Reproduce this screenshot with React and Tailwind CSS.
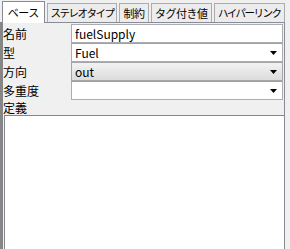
import React from "react";

const font = "font-['MS_UI_Gothic','Noto_Sans_CJK_JP',sans-serif]";

function Arrow() {
  return (
    <svg width="7" height="4" viewBox="0 0 7 4" className="shrink-0">
      <polygon points="0,0 7,0 3.5,4" fill="#000" />
    </svg>
  );
}

function Tab({ label, width, active, tight }) {
  const text = tight ? "tracking-[-1.5px] text-[10.5px]" : "tracking-[-0.5px]";
  if (active) {
    return (
      <div
        className={`relative z-10 -mb-px h-[22px] ${width} flex items-center justify-center whitespace-nowrap bg-white border border-b-0 border-[#898c95] ${text}`}
      >
        {label}
      </div>
    );
  }
  return (
    <div
      className={`h-[19px] ${width} flex items-center justify-center whitespace-nowrap overflow-hidden bg-[#ececec] border border-b-0 border-[#acacac] ${text}`}
    >
      {label}
    </div>
  );
}

function Select({ value, shaded }) {
  return (
    <div
      className={`h-[19px] flex items-center justify-between pl-[3px] pr-[5px] border ${
        shaded
          ? "bg-gradient-to-b from-[#f2f2f2] to-[#dcdcdc] border-[#a5a5a5]"
          : "bg-white border-[#abadb3] border-t-[#a0a0a0]"
      }`}
    >
      <span>{value}</span>
      <Arrow />
    </div>
  );
}

export default function App() {
  return (
    <div
      className={`w-[290px] h-[249px] bg-[#f0f0f0] overflow-hidden text-[12px] leading-none text-black ${font}`}
    >
      {/* TABS */}
      <div className="flex items-end gap-[2px] h-[22px] pl-[2px] w-[285px] text-[11px]">
        <Tab label="ベース" width="w-[43px]" active />
        <Tab label="ステレオタイプ" width="w-[71px]" tight />
        <Tab label="制約" width="w-[30px]" />
        <Tab label="タグ付き値" width="w-[61px]" />
        <Tab label="ハイパーリンク" width="w-[72px]" tight />
      </div>

      {/* PANEL */}
      <div className="w-[285px] h-[227px] border-t border-r border-[#898c95] border-l-[3px] border-l-[#868686] flex flex-col">
        <div className="grid grid-cols-[68px_212px] mt-[1px]">
          <div className="h-[19px] flex items-center">名前</div>
          <div className="h-[19px] flex items-center pl-[3px] bg-white border border-[#abadb3]">
            fuelSupply
          </div>

          <div className="h-[19px] flex items-center">型</div>
          <Select value="Fuel" />

          <div className="h-[19px] flex items-center">方向</div>
          <Select value="out" shaded />

          <div className="h-[19px] flex items-center">多重度</div>
          <Select value="" />
        </div>

        <div className="h-[15px] flex items-center">定義</div>

        <div className="flex-1 ml-[1px] bg-white border-l border-t border-[#828790]" />
      </div>
    </div>
  );
}
